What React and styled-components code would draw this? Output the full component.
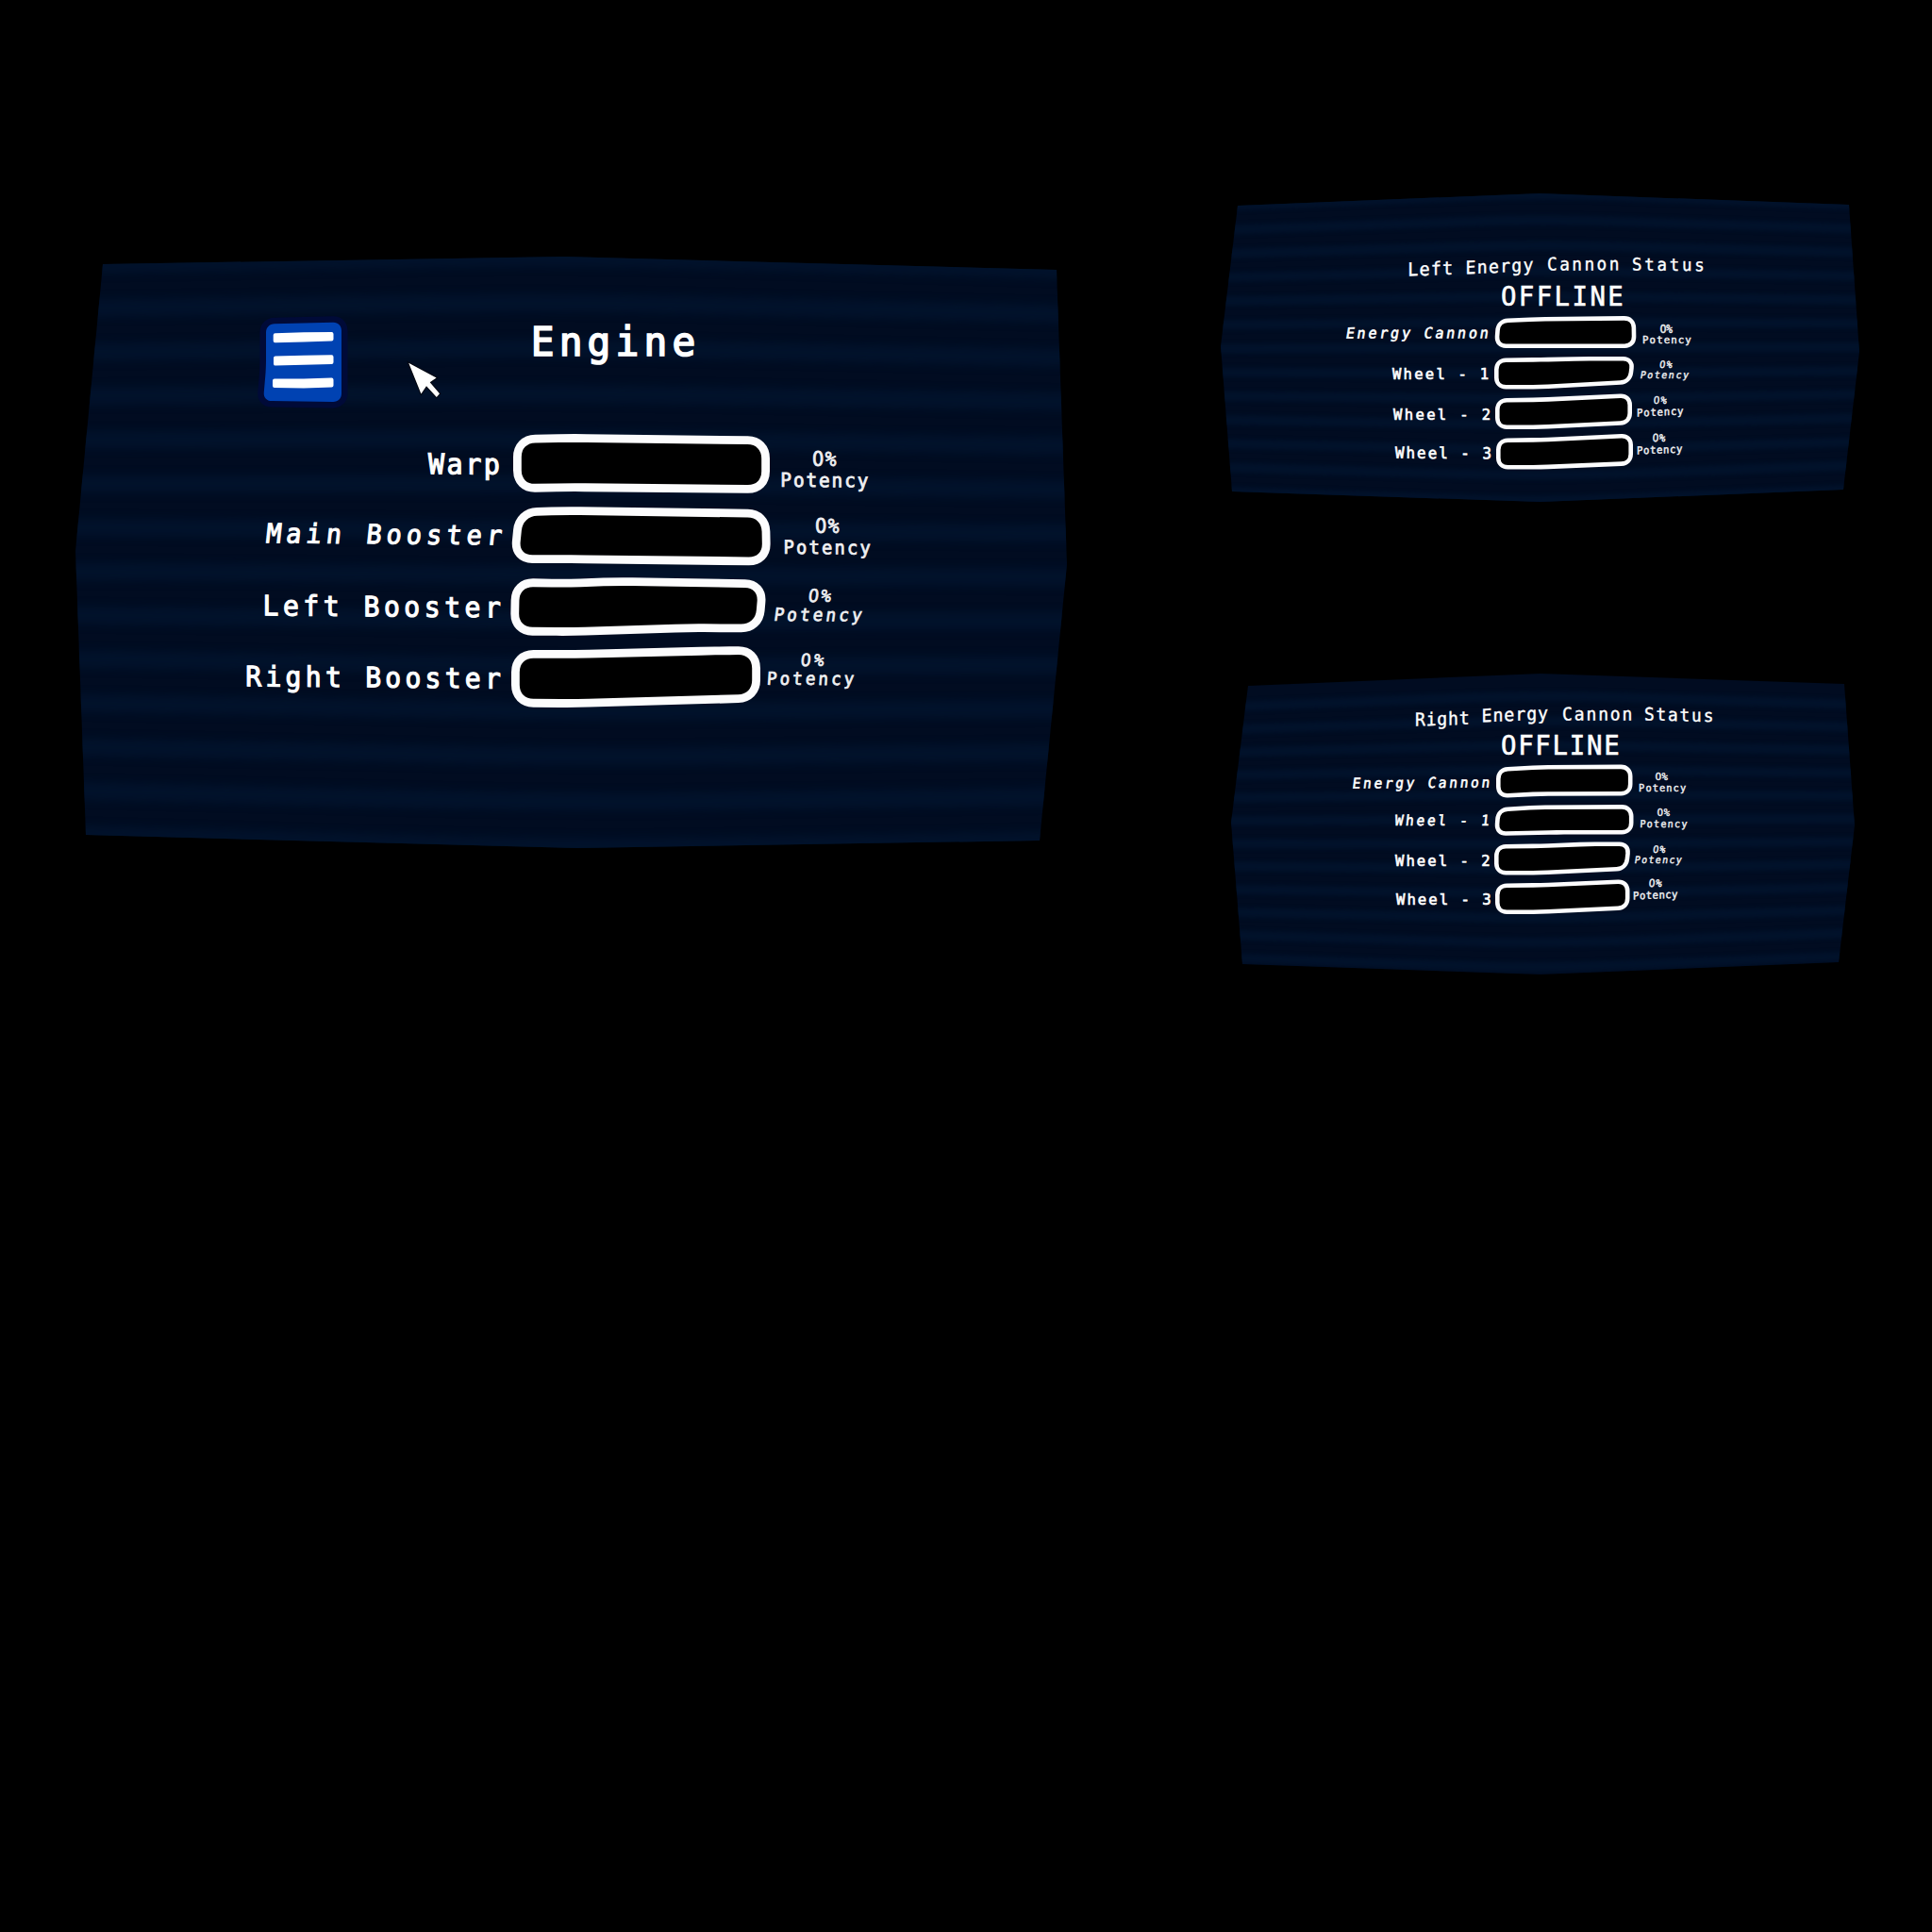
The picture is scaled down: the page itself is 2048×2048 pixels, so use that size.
import React from 'react';
import styled, { createGlobalStyle } from 'styled-components';

const GlobalStyle = createGlobalStyle`
  html, body { margin: 0; background: #000; }
  * { box-sizing: border-box; }
`;

const Deck = styled.main`
  display: flex;
  align-items: flex-start;
  gap: 163px;
  width: 2048px;
  height: 2048px;
  padding-left: 80px;
  overflow: hidden;
  background: #000;
  color: #fff;
  font-family: 'DejaVu Sans Mono', 'Liberation Mono', monospace;
`;

const MainBay = styled.div`
  padding-top: 272px;
`;

const SideBay = styled.div`
  display: flex;
  flex-direction: column;
  gap: 182px;
  padding-top: 205px;
`;

const ScreenFrame = styled.section`
  position: relative;
  isolation: isolate;
  width: ${(p) => p.$w}px;
  height: ${(p) => p.$h}px;
  margin-left: ${(p) => p.$indent || 0}px;
`;

const Backdrop = styled.svg`
  position: absolute;
  inset: 0;
  z-index: -1;
  width: 100%;
  height: 100%;
  display: block;
`;

const EngineHeader = styled.header`
  display: flex;
  align-items: flex-start;
  height: 182px;
  padding: 62px 0 0 192px;
`;

const MenuButton = styled.button`
  width: 98px;
  height: 100px;
  padding: 0;
  border: 0;
  background: none;
`;

const Title = styled.h1`
  margin: 10px 0 0 196px;
  font-weight: 400;
  line-height: 0;
`;

const Cursor = styled.svg`
  position: absolute;
  left: 350px;
  top: 109px;
  width: 40px;
  height: 44px;
`;

const StatusHeader = styled.header`
  height: ${(p) => p.$h}px;
  padding-top: ${(p) => p.$top}px;
`;

const StatusTitle = styled.h2`
  display: flex;
  align-items: flex-start;
  height: ${(p) => p.$h}px;
  margin: 0 0 0 ${(p) => p.$indent}px;
  font-weight: 400;
`;

const StatusValue = styled.div`
  padding-left: ${(p) => p.$indent}px;
  line-height: 0;
`;

const Row = styled.div`
  display: flex;
  align-items: flex-start;
  height: ${(p) => p.$h}px;
`;

const LabelCell = styled.div`
  display: flex;
  justify-content: flex-end;
  flex: none;
  width: ${(p) => p.$w}px;
  padding: ${(p) => p.$drop}px ${(p) => p.$pad}px 0 0;
`;

const GaugeBox = styled.svg`
  flex: none;
  display: block;
  overflow: visible;
`;

const Readout = styled.div`
  display: flex;
  flex-direction: column;
  align-items: flex-start;
  gap: ${(p) => p.$gap}px;
  margin-left: ${(p) => p.$pull}px;
  padding-top: ${(p) => p.$drop}px;
`;

const WordBox = styled.span`
  display: block;
  flex: none;
  width: ${(p) => p.$w}px;
  height: ${(p) => p.$cap}px;
  margin: ${(p) => p.$drop || 0}px 0 0 ${(p) => p.$indent || 0}px;
`;

const WordInk = styled.span`
  display: block;
  width: max-content;
  height: ${(p) => p.$cap}px;
  font-size: ${(p) => p.$size}px;
  line-height: 0.765em;
  letter-spacing: ${(p) => p.$spacing}px;
  white-space: pre;
  color: ${(p) => p.$color || '#fff'};
  -webkit-text-stroke: ${(p) => p.$weight}em currentColor;
  transform-origin: 0 100%;
  transform: translate(${(p) => p.$shift}px, ${(p) => p.$sink}px) skewY(${(p) => p.$tilt || 0}deg)
    skewX(${(p) => p.$slant || 0}deg) scaleX(0.95);
`;

/* The monospace zero has an inner dot; the proportional one is open. */
const Zero = styled.span`
  font-family: 'DejaVu Sans', sans-serif;
  letter-spacing: ${(p) => p.$spacing}px;
`;

/* Side bearings of the monospace face, in em. */
const LEFT = { W: 0, E: 0.08, L: 0.09, P: 0.085, R: 0.06, M: 0.03, C: 0.05, S: 0.06, 0: 0.05, O: 0.04 };
const RIGHT = { y: 0.02, n: 0.06, r: 0, e: 0.03, t: 0.04, p: 0.03, s: 0.06, 1: 0.03, 2: 0.05, 3: 0.05, '%': -0.01, E: 0.03 };
const SQUEEZE = 0.95;

/* Fits a word to an ink width and a cap height by adjusting its tracking. */
function Word({ text, w, cap, drop, indent, tilt, slant, color, weight = 0.04 }) {
  const size = cap / (0.729 + weight);
  const advance = 0.602 * size * SQUEEZE;
  const left = (LEFT[text[0]] ?? 0.06) * size * SQUEEZE;
  const right = (RIGHT[text[text.length - 1]] ?? 0.06) * size * SQUEEZE;
  const pitch = (w - advance + left + right) / (text.length - 1);
  const spacing = (pitch - advance) / SQUEEZE;
  return (
    <WordBox $w={w} $cap={cap} $drop={drop} $indent={indent}>
      <WordInk
        $cap={cap}
        $size={size}
        $spacing={spacing}
        $shift={-left}
        $sink={(weight / 2 + 0.022) * size}
        $tilt={tilt}
        $slant={slant}
        $color={color}
        $weight={weight}
      >
        {text[0] === '0' ? (
          <>
            <Zero $spacing={spacing - 0.034 * size}>0</Zero>
            {text.slice(1)}
          </>
        ) : (
          text
        )}
      </WordInk>
    </WordBox>
  );
}

/* Insets a polygon's corners into quadratic curves. */
function softPath(points, radii) {
  const n = points.length;
  const toward = (a, b, r) => {
    const d = Math.hypot(b[0] - a[0], b[1] - a[1]);
    const k = Math.min(r, d / 2) / d;
    return [a[0] + (b[0] - a[0]) * k, a[1] + (b[1] - a[1]) * k];
  };
  return (
    points
      .map((p, i) => {
        const r = radii(p, i);
        const a = toward(p, points[(i + n - 1) % n], r);
        const b = toward(p, points[(i + 1) % n], r);
        const c1 = [a[0] + (p[0] - a[0]) * 0.6, a[1] + (p[1] - a[1]) * 0.6];
        const c2 = [b[0] + (p[0] - b[0]) * 0.6, b[1] + (p[1] - b[1]) * 0.6];
        return `${i ? 'L' : 'M'}${a.join(' ')} C${c1.join(' ')} ${c2.join(' ')} ${b.join(' ')}`;
      })
      .join(' ') + 'Z'
  );
}

function Gauge({ x, y, w, h, shape, stroke, radius }) {
  const xs = shape.map((p) => p[0]);
  const ys = shape.map((p) => p[1]);
  const midX = (Math.min(...xs) + Math.max(...xs)) / 2;
  const midY = (Math.min(...ys) + Math.max(...ys)) / 2;
  const half = stroke / 2;
  const center = shape.map(([px, py]) => {
    const corner = Math.abs(px - midX) > (Math.max(...xs) - midX) * 0.85;
    return [corner ? px + (px < midX ? half : -half) : px, py + (py < midY ? half : -half), corner];
  });
  return (
    <GaugeBox width={w} height={h} viewBox={`${x} ${y} ${w} ${h}`}>
      <path
        d={softPath(center.map((p) => [p[0], p[1]]), (p, i) => (center[i][2] ? radius : radius * 0.8))}
        fill="#000"
        stroke="#fcfcfd"
        strokeWidth={stroke}
      />
    </GaugeBox>
  );
}

function Screen({ id, w, h, indent, top, bottom, left, right, bands, start = 0, step, thick, children }) {
  const outline = [...top, right, ...[...bottom].reverse(), left];
  const bandPath = (k) => {
    const t = start + step * k;
    const p = top.map((a, i) => [a[0] + (bottom[i][0] - a[0]) * t, a[1] + (bottom[i][1] - a[1]) * t]);
    const s = p[1][0] - p[0][0];
    const e = p[2][0] - p[1][0];
    return `M${p[0][0] - 40} ${p[0][1]} L${p[0][0]} ${p[0][1]} L${p[1][0] - s * 0.25} ${
      p[1][1] + (p[0][1] - p[1][1]) * 0.25
    } Q${p[1][0]} ${p[1][1]} ${p[1][0] + e * 0.25} ${p[1][1] + (p[2][1] - p[1][1]) * 0.25} L${p[2][0]} ${
      p[2][1]
    } L${p[2][0] + 40} ${p[2][1]}`;
  };
  return (
    <ScreenFrame $w={w} $h={h} $indent={indent}>
      <Backdrop viewBox={`0 0 ${w} ${h}`} aria-hidden="true">
        <defs>
          <clipPath id={`${id}-clip`}>
            <polygon points={outline.map((p) => p.join(',')).join(' ')} />
          </clipPath>
          <filter id={`${id}-soft`} x="-5%" y="-5%" width="110%" height="110%" colorInterpolationFilters="sRGB">
            <feGaussianBlur stdDeviation={thick * 0.22} />
          </filter>
        </defs>
        <g clipPath={`url(#${id}-clip)`}>
          <rect width={w} height={h} fill="#010c21" />
          <g filter={`url(#${id}-soft)`} fill="none" stroke="#01122b" strokeWidth={thick}>
            {Array.from({ length: bands }, (_, k) => (
              <path key={k} d={bandPath(k)} />
            ))}
          </g>
        </g>
      </Backdrop>
      {children}
    </ScreenFrame>
  );
}

function MeterRow({ row, y, h, labelW, gaugeX, gaugeW, pull, stroke, radius }) {
  const { label, gauge, percent, unit } = row;
  return (
    <Row $h={h}>
      <LabelCell $w={labelW} $drop={label.drop} $pad={label.pad}>
        <Word text={label.text} w={label.w} cap={label.cap} tilt={label.tilt} slant={label.slant} />
      </LabelCell>
      <Gauge x={gaugeX} y={y} w={gaugeW} h={h} shape={gauge} stroke={stroke} radius={radius} />
      <Readout $pull={pull} $drop={row.drop} $gap={row.gap}>
        <Word text="0%" color="#f0f0f2" {...percent} />
        <Word text="Potency" color="#f0f0f2" {...unit} />
      </Readout>
    </Row>
  );
}

const ENGINE_ROWS = [
  {
    label: { text: 'Warp', w: 75, cap: 23, drop: 26, pad: 11, tilt: 0.3, slant: 0 },
    gauge: [[544, 461], [607, 460], [816, 462.5], [816, 523], [605, 521], [544, 522]],
    drop: 25.3, gap: 6,
    percent: { w: 24.5, cap: 15.7, indent: 51.5 },
    unit: { w: 91, cap: 15.7, indent: 19, tilt: 0.4 },
  },
  {
    label: { text: 'Main Booster', w: 249, cap: 21.7, drop: 24, pad: 9, tilt: 0.5, slant: -6 },
    gauge: [[546, 538.5], [600, 537], [816, 540], [817, 599.5], [605, 597], [541, 597]],
    drop: 20, gap: 6,
    percent: { w: 24.5, cap: 15.7, indent: 55 },
    unit: { w: 90.5, cap: 15.2, indent: 21.6, tilt: 0.5 },
  },
  {
    label: { text: 'Left Booster', w: 250, cap: 22.7, drop: 24, pad: 9, tilt: 0.5, slant: 0 },
    gauge: [[542, 613], [600, 614], [655, 612], [813, 614.5], [809, 670.5], [731, 670], [605, 674], [541, 673.5]],
    drop: 18, gap: 6,
    percent: { w: 23.5, cap: 14.3, indent: 47, slant: -6 },
    unit: { w: 91.5, cap: 14.3, indent: 11, tilt: 0.4, slant: -8 },
  },
  {
    label: { text: 'Right Booster', w: 269, cap: 22.7, drop: 23, pad: 9, tilt: 0.5, slant: 0 },
    gauge: [[542, 689], [609, 689], [758, 685.5], [806, 685], [806, 744.5], [609, 750], [542, 749.5]],
    drop: 9.7, gap: 6.3,
    percent: { w: 24, cap: 14, indent: 39, slant: -5 },
    unit: { w: 90.5, cap: 14.3, indent: 4, tilt: 0.1, slant: -4 },
  },
];

const LEFT_ROWS = [
  {
    label: { text: 'Energy Cannon', w: 149, cap: 12.2, drop: 15.3, pad: 4, tilt: -0.1, slant: -9 },
    gauge: [[1586, 338], [1630, 336], [1734, 335], [1734.5, 369], [1584, 369]],
    drop: 12.7, gap: 3.6,
    percent: { w: 13, cap: 9, indent: 29.7 },
    unit: { w: 50.6, cap: 8.7, indent: 11.7 },
  },
  {
    label: { text: 'Wheel - 1', w: 101.7, cap: 12.6, drop: 15.7, pad: 2.3, slant: 0 },
    gauge: [[1584, 379.5], [1633, 379], [1677, 378], [1733, 378], [1730, 407.3], [1633, 412.5], [1584, 412.5]],
    drop: 9, gap: 3.3,
    percent: { w: 13.2, cap: 8, indent: 29, slant: -7 },
    unit: { w: 50, cap: 8, indent: 9.3, slant: -10 },
  },
  {
    label: { text: 'Wheel - 2', w: 102.3, cap: 12.6, drop: 17, pad: 1, slant: 0 },
    gauge: [[1585, 422], [1633, 421.5], [1730, 417], [1730, 450.3], [1633, 455], [1585, 455]],
    drop: 5.3, gap: 4,
    percent: { w: 13.4, cap: 8.4, indent: 23, slant: -4 },
    unit: { w: 48.3, cap: 8.6, indent: 5.7, tilt: -2.2 },
  },
  {
    label: { text: 'Wheel - 3', w: 101.3, cap: 12.8, drop: 16.3, pad: 0, tilt: 0.3 },
    gauge: [[1586, 464.5], [1633, 464], [1731, 459.5], [1731, 493.5], [1633, 497.5], [1586, 497.5]],
    drop: 3, gap: 4.3,
    percent: { w: 13.3, cap: 8.6, indent: 22.3, slant: -2 },
    unit: { w: 47.3, cap: 8.6, indent: 5.7, tilt: -2.2 },
  },
];

const RIGHT_ROWS = [
  {
    label: { text: 'Energy Cannon', w: 143.7, cap: 11.7, drop: 17.3, pad: 2, tilt: -0.4, slant: -7 },
    gauge: [[1586, 813.5], [1633, 811], [1730.5, 810.5], [1730.5, 843.5], [1633, 843.8], [1586, 846]],
    drop: 11.7, gap: 3.7,
    percent: { w: 13, cap: 8.6, indent: 25.3 },
    unit: { w: 49, cap: 8.4, indent: 8 },
  },
  {
    label: { text: 'Wheel - 1', w: 99.7, cap: 11.8, drop: 15.3, pad: 2, slant: -6 },
    gauge: [[1586, 856], [1630, 853.5], [1731.5, 853], [1731.5, 884.5], [1650, 884.6], [1584, 886]],
    drop: 9.3, gap: 3.6,
    percent: { w: 13, cap: 8.4, indent: 27 },
    unit: { w: 49, cap: 8.2, indent: 9.3, slant: -3 },
  },
  {
    label: { text: 'Wheel - 2', w: 100, cap: 12.6, drop: 15.7, pad: 1 },
    gauge: [[1584, 895], [1633, 894.5], [1683, 892.5], [1729, 892.5], [1726, 923], [1633, 927.5], [1584, 927.5]],
    drop: 7, gap: 3.3,
    percent: { w: 13, cap: 8, indent: 22.3, slant: -7 },
    unit: { w: 49, cap: 8, indent: 3, slant: -9 },
  },
  {
    label: { text: 'Wheel - 3', w: 100, cap: 12.7, drop: 16, pad: 0 },
    gauge: [[1585, 936.5], [1633, 936], [1727.5, 932], [1727.5, 964.5], [1633, 969], [1585, 969]],
    drop: 2.3, gap: 3.7,
    percent: { w: 13.3, cap: 8.6, indent: 18, slant: -4 },
    unit: { w: 46.3, cap: 8.6, indent: 2, tilt: -2.2 },
  },
];

const MENU_SHAPE = [[282, 343.5], [362, 341.5], [362, 426], [279, 425], [282, 390]];

function EngineScreen() {
  const menuPath = softPath(MENU_SHAPE, (p, i) => (i < 4 ? 9 : 8));
  return (
    <Screen
      id="engine"
      w={1051}
      h={627}
      top={[[29, 8], [518, 0], [1040, 14]]}
      right={[1051, 326]}
      bottom={[[11, 613], [532, 627], [1022, 619]]}
      left={[0, 312]}
      bands={14}
      step={1 / 13}
      thick={19}
    >
      <EngineHeader>
        <MenuButton aria-label="Menu">
          <svg width="98" height="100" viewBox="272 334 98 100">
            <path d={menuPath} fill="#000a38" stroke="#000a38" strokeWidth="13" />
            <path d={menuPath} fill="#0042b2" />
            <g fill="#fff" stroke="#fff" strokeWidth="4" strokeLinejoin="round">
              <path d="M291.7 355.2L322 354.2L351.5 354V359.6L322 360.4L291.7 361.2Z" />
              <path d="M292 379.4L322 378.8L351.5 378.2V384L322 384.8L292 385.6Z" />
              <path d="M291 403.6L322 403.4L351.5 402.5V408.6L322 409.4L291 408.9Z" />
            </g>
          </svg>
        </MenuButton>
        <Title>
          <Word text="Engine" w={170} cap={33.3} />
        </Title>
      </EngineHeader>
      {ENGINE_ROWS.map((row, i) => (
        <MeterRow
          key={row.label.text}
          row={row}
          y={454 + 76 * i}
          h={76}
          labelW={460}
          gaugeX={540}
          gaugeW={280}
          pull={-10}
          stroke={8.8}
          radius={19}
        />
      ))}
      <Cursor viewBox="430 381 40 44" aria-hidden="true">
        <path
          d="M433.2 384.8L462.6 400.6L455.7 405.3L466 417.2L462.8 420.9L452 409.2L446.4 417.6Z"
          fill="#fff"
          stroke="#000"
          strokeOpacity="0.6"
          strokeWidth="2"
          paintOrder="stroke"
        />
      </Cursor>
    </Screen>
  );
}

function CannonScreen({ screen, header, title, status, rows, y, rowH, labelW }) {
  return (
    <Screen {...screen}>
      <StatusHeader $h={header.h} $top={header.top}>
        <StatusTitle $h={header.titleH} $indent={header.indent}>
          {title.map((word) => (
            <Word key={word.text} weight={0.02} {...word} />
          ))}
        </StatusTitle>
        <StatusValue $indent={status.indent}>
          <Word text="OFFLINE" w={status.w} cap={21.6} weight={0.02} />
        </StatusValue>
      </StatusHeader>
      {rows.map((row, i) => (
        <MeterRow
          key={row.label.text}
          row={row}
          y={y + rowH * i}
          h={rowH}
          labelW={labelW}
          gaugeX={1580}
          gaugeW={158}
          pull={-8}
          stroke={4.6}
          radius={10}
        />
      ))}
    </Screen>
  );
}

export default function App() {
  return (
    <>
      <GlobalStyle />
      <Deck>
        <MainBay>
          <EngineScreen />
        </MainBay>
        <SideBay>
          <CannonScreen
            screen={{
              id: 'left-cannon',
              w: 677,
              h: 327,
              top: [[18, 13], [338, 0], [666, 12]],
              right: [677, 168],
              bottom: [[12, 316], [339, 327], [660, 314]],
              left: [0, 162],
              bands: 13,
              step: 1 / 12,
              thick: 10,
            }}
            header={{ h: 127, top: 68, titleH: 28.7, indent: 199.7 }}
            title={[
              { text: 'Left', w: 45.3, cap: 14.6, drop: 6.3, tilt: -2.2 },
              { text: 'Energy', w: 70, cap: 14.3, drop: 3.7, indent: 16, tilt: -2.8 },
              { text: 'Cannon', w: 74.3, cap: 14, drop: 0.3, indent: 15.7, tilt: -0.3 },
              { text: 'Status', w: 74.6, cap: 13.7, drop: 0, indent: 15.7, tilt: 0.5 },
            ]}
            status={{ indent: 298, w: 128 }}
            rows={LEFT_ROWS}
            y={332}
            rowH={42}
            labelW={286}
          />
          <CannonScreen
            screen={{
              id: 'right-cannon',
              w: 661,
              h: 319,
              indent: 11,
              top: [[18, 13], [328, 0], [650, 11]],
              right: [661, 161],
              bottom: [[12, 308], [328, 319], [644, 306]],
              left: [0, 158],
              bands: 12,
              start: 0.072,
              step: 0.0825,
              thick: 10,
            }}
            header={{ h: 94, top: 35, titleH: 28.7, indent: 195.7 }}
            title={[
              { text: 'Right', w: 56, cap: 14.3, drop: 7, tilt: -2 },
              { text: 'Energy', w: 68.7, cap: 14.4, drop: 3, indent: 15.3, tilt: -2.6 },
              { text: 'Cannon', w: 72.3, cap: 14.2, drop: 0.3, indent: 16, tilt: -0.2 },
              { text: 'Status', w: 71.3, cap: 14, drop: 1.3, indent: 15, tilt: 1.2 },
            ]}
            status={{ indent: 287, w: 124 }}
            rows={RIGHT_ROWS}
            y={808}
            rowH={41}
            labelW={275}
          />
        </SideBay>
      </Deck>
    </>
  );
}
